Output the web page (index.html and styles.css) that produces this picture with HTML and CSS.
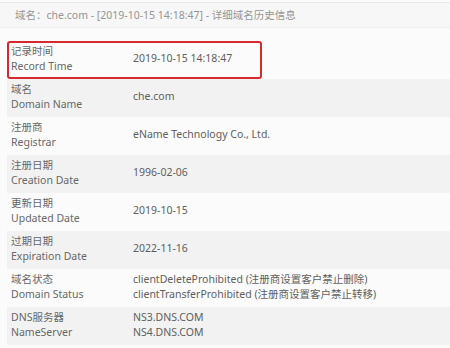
FILE: index.html
```html
<!DOCTYPE html>
<html lang="zh-CN">
<head>
<meta charset="UTF-8">
<meta name="viewport" content="width=device-width, initial-scale=1.0">
<title>che.com 历史信息</title>
<link rel="stylesheet" href="styles.css">
</head>
<body>
<div class="title-bar">域名：che.com - [2019-10-15 14:18:47] - 详细域名历史信息</div>

<div class="record-table">
    <div class="row highlight">
        <div class="label">记录时间<br>Record Time</div>
        <div class="value">2019-10-15 14:18:47</div>
    </div>
    <div class="row alt">
        <div class="label">域名<br>Domain Name</div>
        <div class="value">che.com</div>
    </div>
    <div class="row">
        <div class="label">注册商<br>Registrar</div>
        <div class="value">eName Technology Co., Ltd.</div>
    </div>
    <div class="row alt">
        <div class="label">注册日期<br>Creation Date</div>
        <div class="value">1996-02-06</div>
    </div>
    <div class="row">
        <div class="label">更新日期<br>Updated Date</div>
        <div class="value">2019-10-15</div>
    </div>
    <div class="row alt">
        <div class="label">过期日期<br>Expiration Date</div>
        <div class="value">2022-11-16</div>
    </div>
    <div class="row">
        <div class="label">域名状态<br>Domain Status</div>
        <div class="value">clientDeleteProhibited (注册商设置客户禁止删除)<br>clientTransferProhibited (注册商设置客户禁止转移)</div>
    </div>
    <div class="row alt">
        <div class="label">DNS服务器<br>NameServer</div>
        <div class="value">NS3.DNS.COM<br>NS4.DNS.COM</div>
    </div>
</div>
</body>
</html>
```

FILE: styles.css
```css
body {
    margin: 0;
    padding: 0;
    background-color: #fbfbfb;
    font-family: "Noto Sans", "Noto Sans CJK SC", sans-serif;
    color: #666;
}
.title-bar {
    margin-top: 2px;
    height: 24px;
    line-height: 24px;
    padding-left: 15px;
    background-color: #f7f7f7;
    border-top: 1px solid #e8e8e8;
    border-bottom: 1px solid #efefef;
    font-size: 10.5px;
    color: #959595;
}
.record-table {
    margin: 13px 0 0 7px;
}
.row {
    display: grid;
    grid-template-columns: 122px 1fr;
    align-items: center;
    height: 38px;
    padding: 0 0 3px 4px;
    box-sizing: border-box;
    font-size: 10.5px;
    line-height: 14.5px;
}
.row.alt {
    background-color: #f2f2f2;
}
.row.highlight {
    width: 255px;
    padding-left: 2px;
    border: 2px solid #d82a2e;
    border-radius: 3px;
}
.label {
    color: #686868;
}
.value {
    color: #606060;
}
```
